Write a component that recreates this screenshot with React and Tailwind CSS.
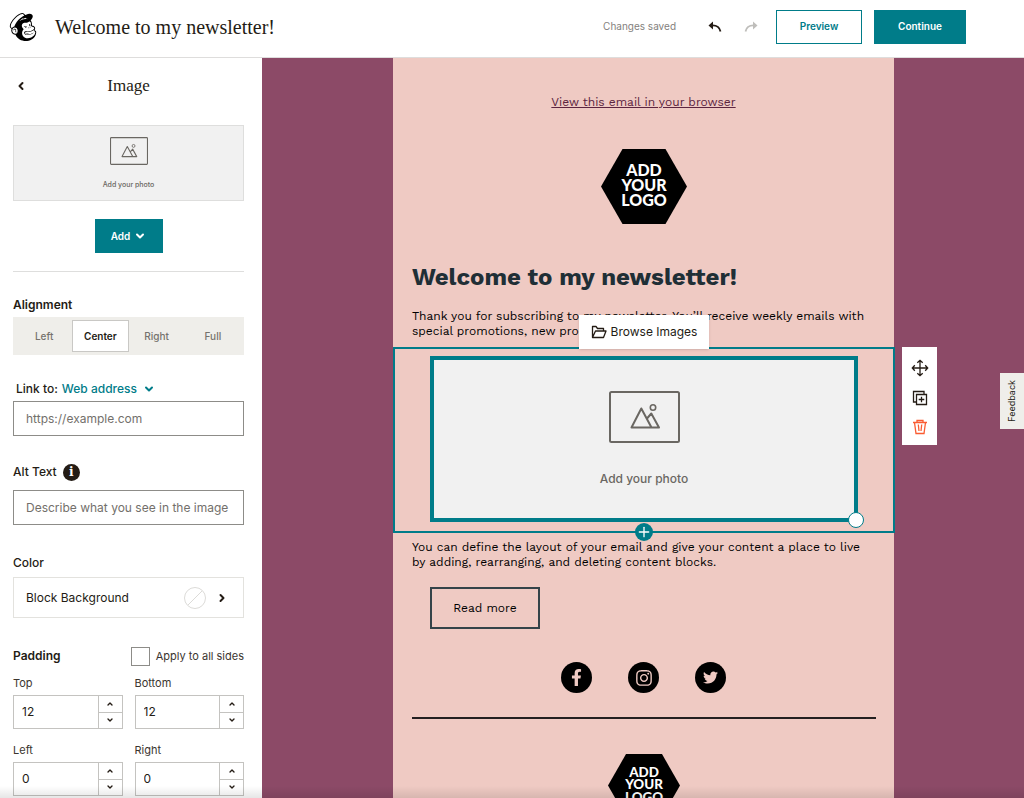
import { ChevronDown, ChevronLeft, ChevronRight, ChevronUp, Plus } from 'lucide-react';
import { FaFacebookF, FaInstagram, FaMailchimp, FaTwitter } from 'react-icons/fa';

const alignments = ['Left', 'Center', 'Right', 'Full'];

const paddings = [
  { id: 'top', label: 'Top', value: '12' },
  { id: 'bottom', label: 'Bottom', value: '12' },
  { id: 'left', label: 'Left', value: '0' },
  { id: 'right', label: 'Right', value: '0' },
];

function PhotoIcon({ className }) {
  return (
    <svg viewBox="0 0 71 52" fill="none" stroke="currentColor" className={className}>
      <rect x="1" y="1" width="69" height="50" rx="1.5" strokeWidth="2" />
      <path d="M22.5 36.500 32.300 17.500 42.500 36.500ZM38 27.500 42.300 22.500 50 36.500H42.500" strokeWidth="2" strokeLinejoin="round" />
      <circle cx="44" cy="16.500" r="2.700" strokeWidth="1.600" />
    </svg>
  );
}

function UndoIcon({ className }) {
  return (
    <svg viewBox="0 0 14 12" fill="none" stroke="currentColor" className={className}>
      <path d="M3 4.500C8 4 11.500 6 12.500 10.500" strokeWidth="1.800" />
      <path d="M0.500 4.500 5 0.500V8.500Z" fill="currentColor" stroke="none" />
    </svg>
  );
}

function FolderIcon({ className }) {
  return (
    <svg viewBox="0 0 16 14" fill="none" stroke="currentColor" strokeWidth="1.300" strokeLinejoin="round" className={className}>
      <path d="M1.500 12.500V1.500H5L6.500 3.500H12.500V6M1.500 12.500 4.500 6H15L12.500 12.500Z" />
    </svg>
  );
}

function MoveIcon({ className }) {
  return (
    <svg viewBox="0 0 18 18" fill="none" stroke="currentColor" strokeWidth="1.300" className={className}>
      <path d="M9 1.500V16.500M1.500 9H16.500M6.300 3.800 9 1.300 11.700 3.800M6.300 14.200 9 16.700 11.700 14.200M3.800 6.300 1.300 9 3.800 11.700M14.200 6.300 16.700 9 14.200 11.700" />
    </svg>
  );
}

function DuplicateIcon({ className }) {
  return (
    <svg viewBox="0 0 16 16" fill="none" stroke="currentColor" strokeWidth="1.300" className={className}>
      <path d="M4 12H1.500V1.500H12V4M4.500 4.500H14.500V14.500H4.500ZM9.500 6.700V12.300M6.700 9.500H12.300" />
    </svg>
  );
}

function TrashIcon({ className }) {
  return (
    <svg viewBox="0 0 16 16" fill="none" stroke="currentColor" strokeWidth="1.300" className={className}>
      <path d="M1 3.500H15M5 3.500V1.500H11V3.500M2.500 3.500 4 14.500H12L13.500 3.500M6.300 5.500 7 12M9.700 5.500 9 12" />
    </svg>
  );
}

function Logo({ className }) {
  return (
    <svg viewBox="0 0 86 75" className={className} role="img" aria-label="Add your logo">
      <path d="M21.500 0H64.500L86 37.500 64.500 75H21.500L0 37.500Z" fill="#000" />
      <g fill="#fff" textAnchor="middle" fontFamily="Lato, sans-serif" fontWeight="900" fontSize="16">
        <text x="43" y="27">ADD</text>
        <text x="43" y="42">YOUR</text>
        <text x="43" y="57">LOGO</text>
      </g>
    </svg>
  );
}

function TextField({ id, placeholder }) {
  return (
    <input
      id={id}
      type="text"
      placeholder={placeholder}
      className="block h-[35px] w-full border border-[#8d8c88] px-3 text-[12px] text-[#241c15] placeholder:text-[#73706b] outline-none"
    />
  );
}

function NumberField({ id, label, value }) {
  return (
    <div>
      <label htmlFor={id} className="block h-4 text-[11px] leading-4 text-[#3b352f]">
        {label}
      </label>
      <div className="mt-1 flex h-[34px] border border-[#c4c3c0]">
        <input id={id} type="text" defaultValue={value} className="w-0 min-w-0 flex-1 px-2 text-[12px] outline-none" />
        <div className="flex w-6 flex-col border-l border-[#c4c3c0]">
          <button type="button" aria-label={`Increase ${id}`} className="flex flex-1 items-center justify-center border-b border-[#c4c3c0]">
            <ChevronUp className="size-2" strokeWidth={4} />
          </button>
          <button type="button" aria-label={`Decrease ${id}`} className="flex flex-1 items-center justify-center">
            <ChevronDown className="size-2" strokeWidth={4} />
          </button>
        </div>
      </div>
    </div>
  );
}

function Header() {
  return (
    <header className="flex h-[58px] shrink-0 items-center border-b border-[#dedddc] bg-white pr-[58px] pb-1 pl-[7px]">
      <FaMailchimp className="size-8 text-black" />
      <h1 className="ml-4 font-['Liberation_Serif',serif] text-[20px] leading-6">Welcome to my newsletter!</h1>
      <span className="ml-auto text-[10px] text-[#84817d]">Changes saved</span>
      <button type="button" aria-label="Undo" className="ml-8">
        <UndoIcon className="h-3 w-3.5" />
      </button>
      <button type="button" aria-label="Redo" className="mr-[18px] ml-[22px] text-[#bfbebb]">
        <UndoIcon className="h-3 w-3.5 -scale-x-100" />
      </button>
      <button type="button" className="h-[34px] w-[86px] border border-[#007c89] text-[10px] font-semibold text-[#007c89]">
        Preview
      </button>
      <button type="button" className="ml-3 h-[34px] w-[92px] bg-[#007c89] text-[10px] font-semibold text-white">
        Continue
      </button>
    </header>
  );
}

function Sidebar() {
  return (
    <aside className="w-[262px] shrink-0 overflow-hidden bg-white pr-[18px] pl-[13px]">
      <div className="grid h-[67px] grid-cols-[1fr_auto_1fr] items-center pb-3">
        <button type="button" aria-label="Back" className="justify-self-start pl-0.5">
          <ChevronLeft className="size-3" strokeWidth={4} />
        </button>
        <h2 className="font-['Liberation_Serif',serif] text-[17px]">Image</h2>
      </div>

      <div className="flex h-[76px] flex-col items-center border border-[#dededd] bg-[#f1f1f1] pt-[11px] text-[#6a6762]">
        <PhotoIcon className="h-7 w-[38px]" />
        <span className="mt-[15px] text-[7px] leading-[10px] font-medium">Add your photo</span>
      </div>

      <button type="button" className="mx-auto mt-[18px] flex h-[34px] w-[68px] items-center justify-center gap-1 bg-[#007c89] text-[10px] font-semibold text-white">
        Add
        <ChevronDown className="size-3" strokeWidth={4} />
      </button>

      <hr className="mt-[18px] border-[#dededd]" />

      <h3 className="mt-[23px] text-[12px] leading-5 font-semibold">Alignment</h3>
      <div className="mt-0.5 grid h-[38px] grid-cols-4 bg-[#efeeea] p-[3px] text-[10px] font-medium text-[#75726d]">
        {alignments.map((name) => (
          <button
            key={name}
            type="button"
            aria-pressed={name === 'Center'}
            className={name === 'Center' ? 'border border-[#c9c8c5] bg-white font-semibold text-[#241c15]' : ''}
          >
            {name}
          </button>
        ))}
      </div>

      <div className="mt-6 flex items-center pl-[3px] text-[12px] leading-5 font-medium">
        <label htmlFor="link">Link to:</label>
        <button type="button" className="ml-1 flex items-center gap-1.5 text-[#007c89]">
          Web address
          <ChevronDown className="size-3" strokeWidth={4} />
        </button>
      </div>
      <div className="mt-0.5">
        <TextField id="link" placeholder="https://example.com" />
      </div>

      <div className="mt-[26px] flex items-center gap-1.5 text-[12px] leading-5 font-medium">
        <label htmlFor="alt">Alt Text</label>
        <span className="flex size-[17px] items-center justify-center rounded-full bg-[#241c15] font-['DejaVu_Serif',serif] text-[12px] font-bold text-white">
          i
        </span>
      </div>
      <div className="mt-2">
        <TextField id="alt" placeholder="Describe what you see in the image" />
      </div>

      <h3 className="mt-7 text-[12px] leading-5 font-medium">Color</h3>
      <button type="button" className="mt-1 flex h-[41px] w-full items-center border border-[#e3e2de] pr-[15px] pl-3 text-[12px]">
        Block Background
        <svg viewBox="0 0 22 22" fill="none" stroke="#dcdbd8" className="mr-2.5 ml-auto size-[22px]">
          <circle cx="11" cy="11" r="10.500" />
          <path d="M4 18 18 4" />
        </svg>
        <ChevronRight className="size-3" strokeWidth={4} />
      </button>

      <div className="mt-7 flex h-5 items-center justify-between">
        <h3 className="text-[12px] font-semibold">Padding</h3>
        <label className="flex items-center gap-1.5 text-[11px] text-[#3b352f]">
          <input type="checkbox" className="size-[19px] appearance-none border border-[#8d8c88]" />
          Apply to all sides
        </label>
      </div>
      <div className="mt-[9px] grid grid-cols-2 gap-x-3 gap-y-[13px]">
        {paddings.map((field) => (
          <NumberField key={field.id} {...field} />
        ))}
      </div>
    </aside>
  );
}

function ImageBlock() {
  return (
    <section className="relative mt-2 -mr-px border-2 border-[#007c89] px-[35px] pt-[7px] pb-[9px] font-[Inter,sans-serif]">
      <div className="relative flex h-[166px] flex-col items-center border-4 border-[#007c89] bg-[#f1f1f1] pt-[31px] text-[#6a6762]">
        <PhotoIcon className="h-[52px] w-[71px]" />
        <span className="mt-[26px] text-[12px] leading-5 font-medium">Add your photo</span>
        <span className="absolute -right-2.5 -bottom-2.5 size-4 rounded-full border border-[#007c89] bg-white" />
      </div>

      <button
        type="button"
        className="absolute bottom-full left-1/2 flex h-[34px] w-[130px] -translate-x-1/2 items-center justify-center gap-1 bg-white text-[12px] text-[#241c15] shadow-sm"
      >
        <FolderIcon className="h-3.5 w-4" />
        Browse Images
      </button>
      <button
        type="button"
        aria-label="Add block"
        className="absolute -bottom-2.5 left-1/2 flex size-[18px] -translate-x-1/2 items-center justify-center rounded-full bg-[#007c89] text-white"
      >
        <Plus className="size-4" strokeWidth={2} />
      </button>

      <div className="absolute -top-0.5 left-full ml-[9px] flex h-[98px] w-[35px] flex-col items-center justify-between bg-white pt-3 pb-2.5 text-[#241c15]">
        <button type="button" aria-label="Move">
          <MoveIcon className="size-[18px]" />
        </button>
        <button type="button" aria-label="Duplicate">
          <DuplicateIcon className="size-4" />
        </button>
        <button type="button" aria-label="Delete" className="text-[#fa5c32]">
          <TrashIcon className="size-4" />
        </button>
      </div>
    </section>
  );
}

function Email() {
  return (
    <article className="h-full w-[501px] bg-[#efcac3] font-['Work_Sans','Noto_Sans',sans-serif] text-black">
      <div className="pt-[34px] text-center text-[12px] leading-5">
        <a href="#browser" className="text-[#5c2440] underline">
          View this email in your browser
        </a>
      </div>
      <Logo className="mx-auto mt-[37px] h-[75px] w-[86px]" />
      <h2 className="mt-[37px] pl-[19px] text-[24px] leading-8 font-bold text-[#1f2f36]">Welcome to my newsletter!</h2>
      <p className="mt-4 pl-[19px] text-[12px] leading-[15px] whitespace-nowrap">
        Thank you for subscribing to my newsletter. You’ll receive weekly emails with
        <br />
        special promotions, new products, and more.
      </p>

      <ImageBlock />

      <p className="mt-[7px] pl-[19px] text-[12px] leading-[15px] whitespace-nowrap">
        You can define the layout of your email and give your content a place to live
        <br />
        by adding, rearranging, and deleting content blocks.
      </p>
      <button type="button" className="mt-[17px] ml-[37px] block h-[42px] w-[110px] border-2 border-[#344349] text-[12px]">
        Read more
      </button>

      <div className="mt-[33px] flex justify-center gap-9 text-[#efcac3]">
        <a href="#facebook" aria-label="Facebook" className="flex size-[31px] items-center justify-center rounded-full bg-black">
          <FaFacebookF className="size-[17px]" />
        </a>
        <a href="#instagram" aria-label="Instagram" className="flex size-[31px] items-center justify-center rounded-full bg-black">
          <FaInstagram className="size-[18px]" />
        </a>
        <a href="#twitter" aria-label="Twitter" className="flex size-[31px] items-center justify-center rounded-full bg-black">
          <FaTwitter className="size-[15px]" />
        </a>
      </div>

      <hr className="mr-[18px] ml-[19px] mt-6 border-t-2 border-[#231f20]" />
      <Logo className="mx-auto mt-[35px] h-[63px] w-[72px]" />
    </article>
  );
}

export default function App() {
  return (
    <div className="relative flex h-screen flex-col overflow-hidden bg-white font-[Inter,sans-serif] text-[#241c15]">
      <Header />
      <div className="flex min-h-0 flex-1">
        <Sidebar />
        <main className="flex min-w-0 flex-1 justify-center overflow-hidden bg-[#8c4a67] pl-px">
          <Email />
        </main>
      </div>

      <button
        type="button"
        className="absolute top-[373px] right-0 flex h-14 w-6 items-center justify-center bg-[#efeeea] text-[9px] [writing-mode:sideways-lr]"
      >
        Feedback
      </button>
      <div className="pointer-events-none absolute inset-x-0 bottom-0 h-3 bg-linear-to-t from-black/10 to-transparent" />
    </div>
  );
}
